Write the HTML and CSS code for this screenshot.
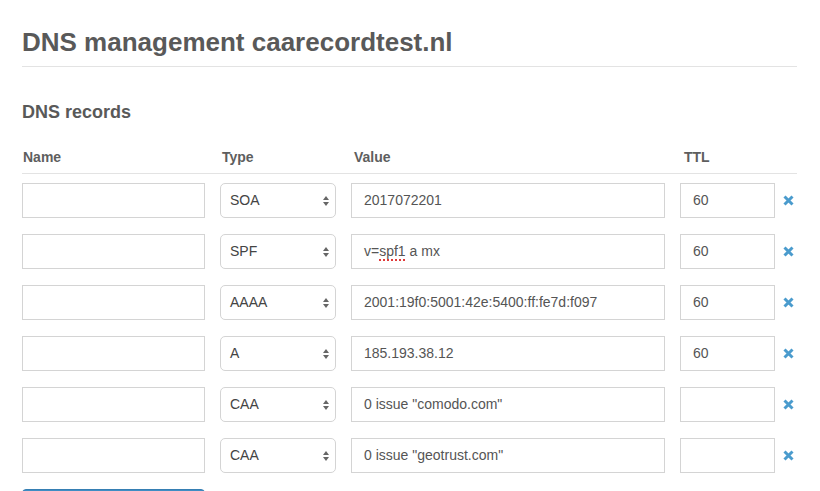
FILE: index.html
```html
<!DOCTYPE html>
<html>
    <head>
        <meta charset="UTF-8">
        <title>DNS management caarecordtest.nl</title>
        <link rel="stylesheet" href="styles.css">
    </head>
    <body>
        <div class="page">
            <h1>DNS management caarecordtest.nl</h1>
            <h2>DNS records</h2>

            <div class="records">
                <div class="row head">
                    <div class="col-name">Name</div>
                    <div class="col-type">Type</div>
                    <div class="col-value">Value</div>
                    <div class="col-ttl">TTL</div>
                </div>

                <div class="row">
                    <div class="field col-name"></div>
                    <div class="select col-type">SOA<span class="arrows"></span></div>
                    <div class="field col-value">2017072201</div>
                    <div class="field col-ttl">60</div>
                    <a class="remove" href="#"><svg width="11" height="11" viewBox="0 0 11 11"><path d="M1.5 1.5 L9.5 9.5 M9.5 1.5 L1.5 9.5" stroke="#4a9bcd" stroke-width="3"/></svg></a>
                </div>
                <div class="row">
                    <div class="field col-name"></div>
                    <div class="select col-type">SPF<span class="arrows"></span></div>
                    <div class="field col-value">v=<span class="typo">spf1</span> a mx</div>
                    <div class="field col-ttl">60</div>
                    <a class="remove" href="#"><svg width="11" height="11" viewBox="0 0 11 11"><path d="M1.5 1.5 L9.5 9.5 M9.5 1.5 L1.5 9.5" stroke="#4a9bcd" stroke-width="3"/></svg></a>
                </div>
                <div class="row">
                    <div class="field col-name"></div>
                    <div class="select col-type">AAAA<span class="arrows"></span></div>
                    <div class="field col-value">2001:19f0:5001:42e:5400:ff:fe7d:f097</div>
                    <div class="field col-ttl">60</div>
                    <a class="remove" href="#"><svg width="11" height="11" viewBox="0 0 11 11"><path d="M1.5 1.5 L9.5 9.5 M9.5 1.5 L1.5 9.5" stroke="#4a9bcd" stroke-width="3"/></svg></a>
                </div>
                <div class="row">
                    <div class="field col-name"></div>
                    <div class="select col-type">A<span class="arrows"></span></div>
                    <div class="field col-value">185.193.38.12</div>
                    <div class="field col-ttl">60</div>
                    <a class="remove" href="#"><svg width="11" height="11" viewBox="0 0 11 11"><path d="M1.5 1.5 L9.5 9.5 M9.5 1.5 L1.5 9.5" stroke="#4a9bcd" stroke-width="3"/></svg></a>
                </div>
                <div class="row">
                    <div class="field col-name"></div>
                    <div class="select col-type">CAA<span class="arrows"></span></div>
                    <div class="field col-value">0 issue "comodo.com"</div>
                    <div class="field col-ttl"></div>
                    <a class="remove" href="#"><svg width="11" height="11" viewBox="0 0 11 11"><path d="M1.5 1.5 L9.5 9.5 M9.5 1.5 L1.5 9.5" stroke="#4a9bcd" stroke-width="3"/></svg></a>
                </div>
                <div class="row">
                    <div class="field col-name"></div>
                    <div class="select col-type">CAA<span class="arrows"></span></div>
                    <div class="field col-value">0 issue "geotrust.com"</div>
                    <div class="field col-ttl"></div>
                    <a class="remove" href="#"><svg width="11" height="11" viewBox="0 0 11 11"><path d="M1.5 1.5 L9.5 9.5 M9.5 1.5 L1.5 9.5" stroke="#4a9bcd" stroke-width="3"/></svg></a>
                </div>
            </div>

            <div class="btn"></div>
        </div>
    </body>
</html>
```

FILE: styles.css
```css
html{
    background:#fff;
}
body{
    margin:0;
    font-family:"Liberation Sans", Arial, sans-serif;
    font-size:14px;
    color:#555;
}
.page{
    padding:0 23px 0 22px;
    overflow:hidden;
    height:491px;
}
h1{
    margin:28px 0 0;
    padding-bottom:9px;
    font-size:26px;
    line-height:29px;
    font-weight:bold;
    color:#595959;
    border-bottom:1px solid #e3e3e3;
}
h2{
    margin:34px 0 0;
    font-size:18px;
    line-height:22px;
    font-weight:bold;
    color:#595959;
}
.records{
    margin-top:25px;
}
.row{
    display:flex;
    align-items:center;
    margin-bottom:16px;
}
.row.head{
    font-weight:bold;
    height:25px;
    margin-bottom:9px;
    border-bottom:1px solid #e3e3e3;
    align-items:flex-start;
    line-height:18px;
    color:#5e5e5e;
}
.head div{
    padding-left:1px;
}
.col-name{
    width:183px;
    margin-right:15px;
}
.col-type{
    width:116px;
    margin-right:15px;
}
.col-value{
    width:314px;
    margin-right:15px;
}
.col-ttl{
    width:95px;
}
.field, .select{
    box-sizing:border-box;
    height:35px;
    line-height:33px;
    border:1px solid #d4d4d4;
    padding:0 12px;
    color:#555;
    white-space:nowrap;
    overflow:hidden;
    background:#fff;
}
.select{
    border-radius:5px;
    padding:0 9px;
    position:relative;
    color:#444;
}
.arrows{
    position:absolute;
    right:6px;
    top:12px;
    width:0;
    height:0;
    border-left:3px solid transparent;
    border-right:3px solid transparent;
    border-bottom:4px solid #666;
}
.arrows:after{
    content:"";
    position:absolute;
    left:-3px;
    top:6px;
    border-left:3px solid transparent;
    border-right:3px solid transparent;
    border-top:4px solid #666;
}
.typo{
    text-decoration:underline dotted #e03a3a;
    text-decoration-thickness:2px;
    text-underline-offset:3px;
}
.remove{
    display:block;
    margin-left:8px;
    height:11px;
    line-height:0;
}
.btn{
    margin-top:1px;
    width:181px;
    height:34px;
    background:#3f8dc4;
    border:1px solid #367fb3;
    border-radius:4px 4px 0 0;
}
```
